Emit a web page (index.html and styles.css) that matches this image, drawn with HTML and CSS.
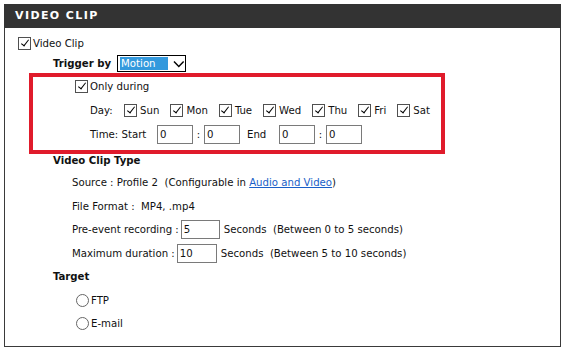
FILE: index.html
```html
<!DOCTYPE html>
<html>
<head>
<meta charset="utf-8">
<link rel="stylesheet" href="styles.css">
</head>
<body>
<div class="panel">
  <div class="hdr">VIDEO CLIP</div>
  <div class="body">
    <div class="row r-main"><span class="cb"></span><span class="lbl">Video Clip</span></div>
    <div class="row r-trig">
      <b class="bold">Trigger by</b>
      <div class="select"><span class="sel-val">Motion</span>
        <svg class="chev" width="12" height="8" viewBox="0 0 12 8"><path d="M1 1.5 L6 6.5 L11 1.5" fill="none" stroke="#000" stroke-width="1.5"/></svg>
      </div>
    </div>
    <div class="redbox">
      <div class="rrow r-only"><span class="cb"></span><span class="lbl">Only during</span></div>
      <div class="rrow r-day">
        <span class="daylbl">Day:</span>
        <span class="day"><span class="cb"></span><span class="lbl">Sun</span></span>
        <span class="day"><span class="cb"></span><span class="lbl">Mon</span></span>
        <span class="day"><span class="cb"></span><span class="lbl">Tue</span></span>
        <span class="day"><span class="cb"></span><span class="lbl">Wed</span></span>
        <span class="day"><span class="cb"></span><span class="lbl">Thu</span></span>
        <span class="day"><span class="cb"></span><span class="lbl">Fri</span></span>
        <span class="day"><span class="cb"></span><span class="lbl">Sat</span></span>
      </div>
      <div class="rrow r-time">
        <span class="timelbl">Time: Start</span>
        <input class="tin" value="0"><span class="colon">:</span><input class="tin" value="0">
        <span class="endlbl">End</span>
        <input class="tin" value="0"><span class="colon">:</span><input class="tin" value="0">
      </div>
    </div>
    <div class="row r-sec r-vct"><b class="bold">Video Clip Type</b></div>
    <div class="row r-item">Source : Profile 2&nbsp; (Configurable in <a class="link" href="#">Audio and Video</a>)</div>
    <div class="row r-item">File Format :&nbsp; MP4, .mp4</div>
    <div class="row r-item">Pre-event recording :<input class="nin nin-pre" value="5"><span class="sec">Seconds&nbsp; (Between 0 to 5 seconds)</span></div>
    <div class="row r-item">Maximum duration :<input class="nin nin-max" value="10"><span class="sec">Seconds&nbsp; (Between 5 to 10 seconds)</span></div>
    <div class="row r-sec r-tgt"><b class="bold">Target</b></div>
    <div class="row r-radio"><span class="radio"></span><span class="lbl">FTP</span></div>
    <div class="row r-radio"><span class="radio"></span><span class="lbl">E-mail</span></div>
  </div>
</div>
</body>
</html>
```

FILE: styles.css
```css
html, body {
  margin: 0;
  padding: 0;
  background: #fff;
}
body {
  font-family: "DejaVu Sans", sans-serif;
  font-stretch: condensed;
  font-size: 11.3px;
  color: #111;
}
.panel {
  margin: 4px 0 0 4px;
  width: 557px;
  height: 343px;
  box-sizing: border-box;
  border: 1px solid #3a3a3a;
  border-top: none;
}
.hdr {
  margin: 0 -1px;
  height: 24px;
  background: #333333;
  color: #fff;
  font-family: "DejaVu Sans", sans-serif;
  font-stretch: normal;
  font-weight: bold;
  font-size: 11px;
  letter-spacing: 1.4px;
  line-height: 24px;
  padding-left: 11px;
}
.body {
  padding-top: 4px;
}
.row {
  display: flex;
  align-items: center;
  white-space: pre;
}
.r-main {
  height: 23px;
  padding-left: 13px;
}
.r-trig {
  height: 17px;
  padding-left: 48px;
}
.bold {
  font-weight: bold;
  font-size: 11.3px;
}
.lbl {
  margin-left: 2px;
}
.cb {
  position: relative;
  display: inline-block;
  width: 11px;
  height: 11px;
  border: 1px solid #505050;
  background: #fff;
  flex: none;
}
.cb::after {
  content: "";
  position: absolute;
  left: 3.5px;
  top: 0px;
  width: 3px;
  height: 7px;
  border: solid #000;
  border-width: 0 1.7px 1.7px 0;
  transform: rotate(38deg);
}
.select {
  margin-left: 6px;
  width: 69px;
  height: 17px;
  box-sizing: border-box;
  border: 1px solid #000;
  display: flex;
  align-items: center;
  padding-left: 2px;
}
.sel-val {
  background: #3399dd;
  color: #fff;
  width: 49px;
  height: 13px;
  line-height: 13px;
  padding-left: 1px;
}
.chev {
  margin-left: 5px;
}
.redbox {
  margin: 1px 0 0 24px;
  width: 416px;
  height: 81px;
  box-sizing: border-box;
  border: 4px solid #e01b2b;
  display: flex;
  flex-direction: column;
  gap: 6px;
}
.rrow {
  height: 18px;
  display: flex;
  align-items: center;
  white-space: pre;
}
.r-only {
  padding-left: 42px;
}
.r-day, .r-time {
  padding-left: 57px;
}
.daylbl {
  width: 35px;
}
.day {
  display: inline-flex;
  align-items: center;
  margin-right: 11px;
}
.day .lbl {
  margin-left: 3px;
}
.timelbl {
  width: 67px;
}
.tin, .nin {
  font-family: inherit;
  font-stretch: condensed;
  font-size: 11.3px;
  color: #111;
  box-sizing: border-box;
  width: 36px;
  height: 19px;
  border: 1px solid #7a7a7a;
  padding: 0 0 0 2px;
  margin: 0;
  background: #fff;
  outline: none;
}
.colon {
  width: 11px;
  text-align: center;
}
.endlbl {
  margin-left: 7px;
  width: 32px;
}
.r-vct {
  height: 13px;
  margin-bottom: 4px;
}
.r-sec {
  padding-left: 48px;
}
.r-tgt {
  height: 23.5px;
}
.r-item {
  height: 23.5px;
  padding-left: 67px;
}
.r-radio {
  height: 23.5px;
  padding-left: 71px;
}
.link {
  color: #1a5fc8;
  text-decoration: underline;
}
.nin-pre {
  width: 39px;
  margin-left: 2px;
}
.nin-max {
  width: 40px;
  margin-left: 2px;
}
.sec {
  margin-left: 4px;
}
.radio {
  display: inline-block;
  width: 11px;
  height: 11px;
  border: 1px solid #666;
  border-radius: 50%;
  background: #fff;
}
```
